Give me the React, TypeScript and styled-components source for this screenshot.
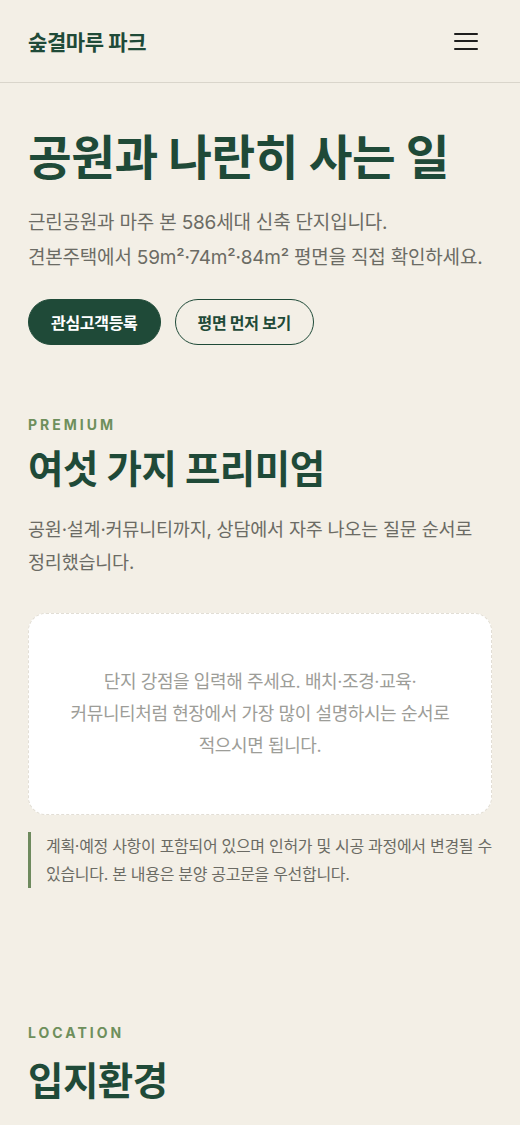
import styled, { createGlobalStyle } from "styled-components";

const GlobalStyle = createGlobalStyle`
  html, body {
    margin: 0;
    padding: 0;
    background: #f3efe6;
  }

  body {
    font-family: Inter, "Noto Sans CJK KR", sans-serif;
    color: #1f4a38;
    -webkit-font-smoothing: antialiased;
    word-break: keep-all;
  }

  * {
    box-sizing: border-box;
  }
`;

const Page = styled.div`
  min-height: 1125px;
  background: #f3efe6;
`;

const Header = styled.header`
  display: flex;
  align-items: center;
  justify-content: space-between;
  height: 83px;
  padding: 0 28px;
  border-bottom: 1px solid #d9d5cb;
`;

const Logo = styled.div`
  font-size: 21px;
  font-weight: 700;
  letter-spacing: -0.4px;
  color: #1f4a38;
`;

const MenuButton = styled.button`
  display: flex;
  flex-direction: column;
  gap: 5.5px;
  width: 24px;
  padding: 0;
  margin-right: 14px;
  border: none;
  background: transparent;
  cursor: pointer;

  span {
    display: block;
    height: 2px;
    background: #1e1e1e;
    border-radius: 1px;
  }
`;

const Hero = styled.section`
  padding: 44px 28px 0;
`;

const HeroTitle = styled.h1`
  margin: 0;
  font-size: 47.5px;
  line-height: 61px;
  font-weight: 700;
  letter-spacing: -0.5px;
  color: #1f4a38;
`;

const HeroText = styled.p`
  margin: 17px 0 0;
  font-size: 19px;
  line-height: 35px;
  letter-spacing: -0.2px;
  color: #6b6b64;
`;

const Actions = styled.div`
  display: flex;
  gap: 14px;
  margin-top: 24px;
`;

const Button = styled.button<{ $primary?: boolean }>`
  height: 46px;
  padding: 0 22px;
  border-radius: 23px;
  border: 1.5px solid #1f4a38;
  background: ${({ $primary }) => ($primary ? "#1f4a38" : "transparent")};
  color: ${({ $primary }) => ($primary ? "#ffffff" : "#1f4a38")};
  font-family: inherit;
  font-size: 16px;
  font-weight: 700;
  letter-spacing: -0.3px;
  cursor: pointer;
`;

const Section = styled.section<{ $top: number }>`
  padding: ${({ $top }) => $top}px 28px 0;
`;

const Eyebrow = styled.div`
  font-size: 14px;
  line-height: 20px;
  font-weight: 700;
  letter-spacing: 3px;
  color: #6e8f5c;
`;

const SectionTitle = styled.h2<{ $gap: number }>`
  margin: ${({ $gap }) => $gap}px 0 0;
  font-size: 38.5px;
  line-height: 49px;
  font-weight: 700;
  letter-spacing: -0.5px;
  color: #1f4a38;
`;

const SectionText = styled.p`
  margin: 19px 0 0;
  font-size: 18.5px;
  line-height: 33px;
  letter-spacing: -0.2px;
  color: #6b6b64;
`;

const Placeholder = styled.div`
  display: flex;
  align-items: center;
  justify-content: center;
  min-height: 202px;
  margin-top: 34px;
  padding: 30px 36px;
  border: 1.5px dashed #e2ded5;
  border-radius: 18px;
  background: #ffffff;
  text-align: center;
  font-size: 18px;
  line-height: 32px;
  letter-spacing: -0.4px;
  color: #9d9d98;
`;

const Note = styled.p`
  margin: 17px 0 0;
  padding: 0 0 0 15px;
  border-left: 3px solid #6e8a5e;
  font-size: 16px;
  line-height: 28px;
  letter-spacing: -0.3px;
  color: #6b6b64;
`;

export default function App() {
  return (
    <Page>
      <GlobalStyle />
      <Header>
        <Logo>숲결마루 파크</Logo>
        <MenuButton aria-label="메뉴">
          <span />
          <span />
          <span />
        </MenuButton>
      </Header>

      <Hero>
        <HeroTitle>공원과 나란히 사는 일</HeroTitle>
        <HeroText>
          근린공원과 마주 본 586세대 신축 단지입니다.
          <br />
          견본주택에서 59m²·74m²·84m² 평면을 직접 확인하세요.
        </HeroText>
        <Actions>
          <Button $primary>관심고객등록</Button>
          <Button>평면 먼저 보기</Button>
        </Actions>
      </Hero>

      <Section $top={70}>
        <Eyebrow>PREMIUM</Eyebrow>
        <SectionTitle $gap={10}>여섯 가지 프리미엄</SectionTitle>
        <SectionText>
          공원·설계·커뮤니티까지, 상담에서 자주 나오는 질문 순서로 정리했습니다.
        </SectionText>
        <Placeholder>
          단지 강점을 입력해 주세요. 배치·조경·교육·
          <br />
          커뮤니티처럼 현장에서 가장 많이 설명하시는 순서로
          <br />
          적으시면 됩니다.
        </Placeholder>
        <Note>
          계획·예정 사항이 포함되어 있으며 인허가 및 시공 과정에서 변경될 수
          있습니다. 본 내용은 분양 공고문을 우선합니다.
        </Note>
      </Section>

      <Section $top={135}>
        <Eyebrow>LOCATION</Eyebrow>
        <SectionTitle $gap={14}>입지환경</SectionTitle>
      </Section>
    </Page>
  );
}
